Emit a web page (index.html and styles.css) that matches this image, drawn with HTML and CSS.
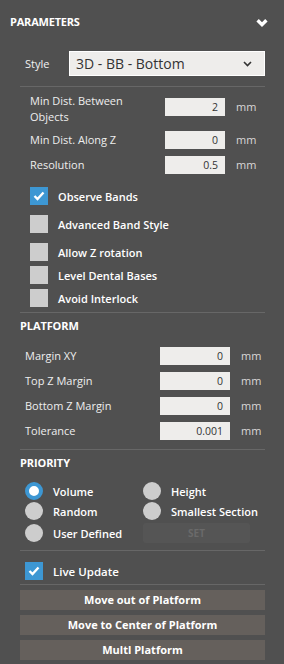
FILE: index.html
```html
<!DOCTYPE html>
<html lang="en">
<head>
<meta charset="UTF-8">
<title>Parameters</title>
<link rel="stylesheet" href="styles.css">
</head>
<body>
<div class="panel">

<div class="head">
<span>PARAMETERS</span>
<svg class="chev" width="12" height="10" viewBox="0 0 12 10"><path d="M1.6 2.2 L6 6.6 L10.4 2.2" fill="none" stroke="#fff" stroke-width="3.4"/></svg>
</div>

<div class="stylerow">
<span class="stylelbl">Style</span>
<div class="select">
<span>3D - BB - Bottom</span>
<svg width="9" height="6" viewBox="0 0 9 6"><path d="M1 1 L4.5 4.5 L8 1" fill="none" stroke="#333" stroke-width="1.6"/></svg>
</div>
</div>

<div class="line"></div>

<div class="params">
<div class="prow tall"><span class="plbl">Min Dist. Between<br>Objects</span><div class="inp">2</div><span class="unit">mm</span></div>
<div class="prow"><span class="plbl">Min Dist. Along Z</span><div class="inp">0</div><span class="unit">mm</span></div>
<div class="prow"><span class="plbl">Resolution</span><div class="inp">0.5</div><span class="unit">mm</span></div>
</div>

<div class="checks">
<div class="chk gap"><span class="box on"><svg width="12" height="10" viewBox="0 0 12 10"><path d="M1.5 5 L4.5 8 L10.5 1.5" fill="none" stroke="#fff" stroke-width="2.4"/></svg></span>Observe Bands</div>
<div class="chk gap"><span class="box"></span>Advanced Band Style</div>
<div class="chk"><span class="box"></span>Allow Z rotation</div>
<div class="chk"><span class="box"></span>Level Dental Bases</div>
<div class="chk"><span class="box"></span>Avoid Interlock</div>
</div>

<div class="line"></div>

<div class="sect">PLATFORM</div>
<div class="plat">
<div class="prow2"><span class="plbl2">Margin XY</span><div class="inp wide">0</div><span class="unit">mm</span></div>
<div class="prow2"><span class="plbl2">Top Z Margin</span><div class="inp wide">0</div><span class="unit">mm</span></div>
<div class="prow2"><span class="plbl2">Bottom Z Margin</span><div class="inp wide">0</div><span class="unit">mm</span></div>
<div class="prow2"><span class="plbl2">Tolerance</span><div class="inp wide">0.001</div><span class="unit">mm</span></div>
</div>

<div class="line"></div>

<div class="sect">PRIORITY</div>
<div class="radios">
<div class="rad"><span class="dot on"></span>Volume</div>
<div class="rad"><span class="dot"></span>Height</div>
<div class="rad"><span class="dot"></span>Random</div>
<div class="rad"><span class="dot"></span>Smallest Section</div>
<div class="rad"><span class="dot"></span>User Defined</div>
<div class="setbtn">SET</div>
</div>

<div class="line"></div>

<div class="live"><span class="box on"><svg width="12" height="10" viewBox="0 0 12 10"><path d="M1.5 5 L4.5 8 L10.5 1.5" fill="none" stroke="#fff" stroke-width="2.4"/></svg></span>Live Update</div>

<div class="line"></div>

<div class="btns">
<div class="btn">Move out of Platform</div>
<div class="btn">Move to Center of Platform</div>
<div class="btn">Multl Platform</div>
</div>

</div>
</body>
</html>
```

FILE: styles.css
```css
*{
margin: 0;
padding: 0;
box-sizing: border-box;
}

body{
background: #505050;
font-family: "Open Sans", "Noto Sans", sans-serif;
font-size: 11px;
color: #f2f2f2;
}

.panel{
width: 284px;
height: 664px;
padding-top: 14px;
}

.head{
display: flex;
justify-content: space-between;
align-items: center;
padding: 0 16px 0 10px;
font-weight: 700;
font-size: 11px;
letter-spacing: -0.2px;
color: #fff;
height: 14px;
}

.chev{
margin-top: 3px;
}

.stylerow{
display: flex;
align-items: center;
margin: 23px 19px 0 25px;
}

.stylelbl{
width: 44px;
font-size: 11px;
}

.select{
width: 196px;
height: 25px;
background: #eeedeb;
border: 1px solid #fff;
display: flex;
align-items: center;
justify-content: space-between;
padding: 0 12px 0 6px;
color: #333;
font-size: 14px;
}

.line{
height: 1px;
background: #676767;
margin: 0 19px 0 20px;
}

.stylerow + .line{
margin-top: 10px;
}

.params{
padding: 3px 0 0 30px;
}

.prow{
display: flex;
align-items: center;
height: 25px;
}

.prow.tall{
height: 37px;
align-items: flex-start;
}

.prow.tall .plbl{
margin-top: 3px;
}

.prow.tall .inp,
.prow.tall .unit{
margin-top: 8px;
}

.plbl,
.plbl2{
width: 135px;
line-height: 16px;
color: #eee;
}

.inp{
width: 60px;
height: 18px;
background: #eeedeb;
color: #333;
text-align: right;
padding-right: 7px;
line-height: 18px;
font-size: 10.5px;
}

.unit{
margin-left: 11px;
color: #d8d8d8;
}

.prow.tall .unit{
line-height: 18px;
}

.checks{
padding: 10px 0 0 30px;
}

.chk{
display: flex;
align-items: center;
height: 18px;
margin-bottom: 5px;
font-weight: 600;
color: #fff;
}

.chk.gap{
margin-bottom: 10px;
}

.box{
width: 18px;
height: 18px;
background: #cdcdcd;
margin-right: 10px;
display: flex;
align-items: center;
justify-content: center;
}

.box.on{
background: #3d97d3;
}

.sect{
font-weight: 700;
padding: 5px 0 0 20px;
height: 21px;
line-height: 16px;
font-size: 11px;
letter-spacing: -0.1px;
color: #fff;
}

.plat{
padding: 9px 0 6px 25px;
}

.prow2{
display: flex;
align-items: center;
height: 25px;
}

.inp.wide{
width: 70px;
}

.radios{
display: grid;
grid-template-columns: 118px 122px;
grid-template-rows: 18px 18px 22px;
align-items: center;
row-gap: 2px;
padding: 11px 0 6px 25px;
}

.rad{
display: flex;
align-items: center;
height: 18px;
font-weight: 600;
color: #fff;
}

.dot{
width: 18px;
height: 18px;
border-radius: 50%;
background: #cdcdcd;
margin-right: 10px;
}

.dot.on{
background: #fff;
border: 4px solid #3d97d3;
}

.setbtn{
width: 107px;
height: 20px;
background: #555;
border-radius: 3px;
color: #6a6a6a;
font-weight: 700;
font-size: 10px;
text-align: center;
line-height: 20px;
}

.live{
display: flex;
align-items: center;
padding: 11px 0 4px 25px;
font-weight: 600;
font-size: 11.5px;
color: #fff;
}

.btns{
padding: 5px 19px 0 20px;
}

.btn{
height: 20px;
background: #65605c;
margin-bottom: 5px;
text-align: center;
line-height: 20px;
font-weight: 700;
color: #fff;
}
```
